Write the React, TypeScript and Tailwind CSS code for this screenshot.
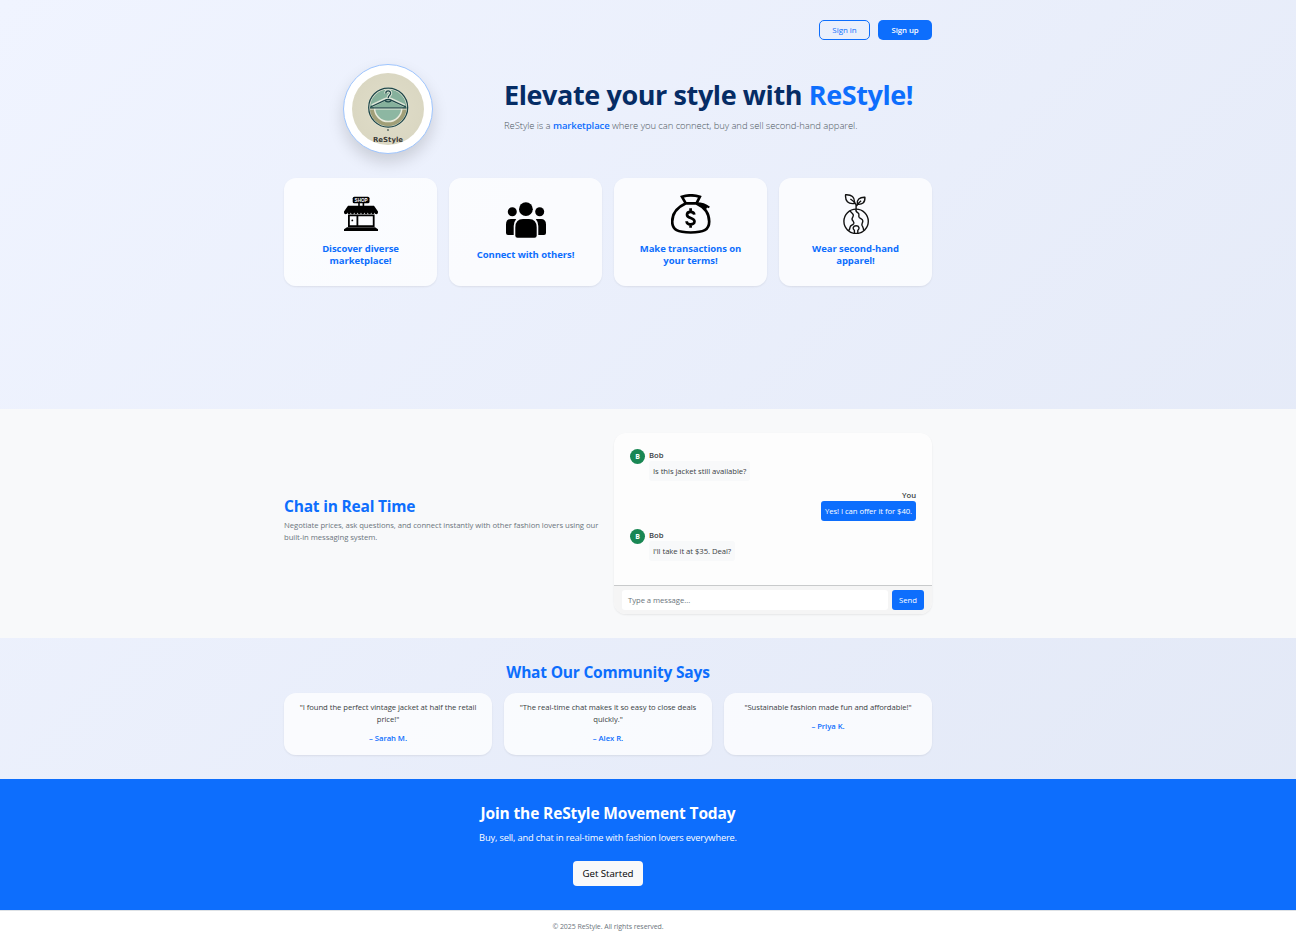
import type { ReactNode } from "react";

function Logo() {
  return (
    <svg viewBox="0 0 72 72" className="size-[72px] rounded-full">
      <defs>
        <radialGradient id="paper">
          <stop offset="0" stopColor="#e0ddc9" />
          <stop offset="1" stopColor="#dad7c2" />
        </radialGradient>
      </defs>
      <rect width="72" height="72" fill="url(#paper)" />
      <circle cx="36.2" cy="34.6" r="20.6" fill="#e6e6d6" />
      <circle cx="36.2" cy="34.6" r="18.2" fill="#86b19c" />
      <path d="M18 35a18.2 18.2 0 0 0 36.4 0z" fill="#a19f78" />
      <path d="M22.6 35a13.6 13.6 0 0 0 27.2 0z" fill="#8db7a2" stroke="#e9ebdd" strokeWidth="1.5" />
      <circle cx="36.2" cy="34.6" r="19.5" fill="none" stroke="#20484a" strokeWidth="1.3" />
      <path
        d="M33.8 20.4c0-3.4 4.8-3.4 4.8-.2 0 2.200-2.400 2-2.400 4.800M20 32.600l12.700-6q3.500-1.600 7 0l12.700 6"
        fill="none"
        stroke="#dfe6d8"
        strokeWidth="3.2"
      />
      <path
        d="M33.8 20.4c0-3.4 4.8-3.4 4.8-.2 0 2.200-2.400 2-2.400 4.800M18.500 34l14.200-6.600q3.500-1.800 7 0L54 34M33.200 28q3 1.600 6 0"
        fill="none"
        stroke="#20484a"
        strokeWidth="1.3"
      />
      <path d="M18 36h36.5" stroke="#e9ebdd" strokeWidth="1" />
      <path d="M18 34.900h36.5" stroke="#20484a" strokeWidth="1.2" />
      <circle cx="36" cy="57" r="0.9" fill="#4d5f58" />
      <text x="36" y="69" textAnchor="middle" textLength="30" className="fill-[#3b3b38] font-['DejaVu_Sans'] text-[7px] font-bold">
        ReStyle
      </text>
    </svg>
  );
}

function ShopIcon() {
  return (
    <svg viewBox="0 0 40 40" className="size-10">
      <rect x="11.7" y="2.7" width="16.8" height="6.6" rx="1.6" />
      <text x="20.1" y="7.7" textAnchor="middle" textLength="13" className="fill-white font-['Liberation_Sans'] text-[4.6px] font-bold">
        SHOP
      </text>
      <path d="M17.2 9h1.6v3h-1.6zM21.6 9h1.6v3h-1.6z" />
      <path d="M7 11.7h26L37 17.5v1a1.7 1.7 0 0 1-3.4 0 1.7 1.7 0 0 1-3.4 0 1.7 1.7 0 0 1-3.4 0 1.7 1.7 0 0 1-3.4 0 1.7 1.7 0 0 1-3.4 0 1.7 1.7 0 0 1-3.4 0 1.7 1.7 0 0 1-3.4 0 1.7 1.7 0 0 1-3.4 0 1.7 1.7 0 0 1-3.4 0 1.7 1.7 0 0 1-3.4 0v-1z" />
      <path d="M7.900 21.300h24.800v10.800H7.900zM16.400 21.500v10.600" fill="none" stroke="#000" strokeWidth="1.8" />
      <circle cx="11.3" cy="26.4" r="0.9" />
      <path d="M6 33.300h28l3 2V37H3v-1.700z" />
    </svg>
  );
}

function PeopleIcon() {
  return (
    <svg viewBox="0 0 40 40" className="size-10">
      <circle cx="19.9" cy="9.2" r="6.9" />
      <circle cx="6.3" cy="11.8" r="4.5" />
      <circle cx="33.7" cy="11.8" r="4.5" />
      <path d="M17 19h6q7.700 0 7.700 8.500v8q0 2.200-2.200 2.200h-17q-2.200 0-2.200-2.200v-8Q9.300 19 17 19z" />
      <path d="M5 19h4.500q1 0 .5.600-2.300 2.400-2.300 6.400v9H2q-2 0-2-2v-8.500Q0 19 5 19zM35 19h-4.500q-1 0-.5.600 2.300 2.400 2.300 6.400v9H38q2 0 2-2v-8.500q0-5.500-5-5.500z" />
    </svg>
  );
}

function MoneyBagIcon() {
  return (
    <svg viewBox="0 0 40 40" className="size-10" fill="none" stroke="#000" strokeWidth="2.7">
      <path d="M14.800 9.400 11 2.800Q19.800-.2 28.800 2.800L25.500 9.400z" />
      <path d="M14.500 9.400C5.500 13.500 1.200 20.500 1.200 27.500c0 8.500 5.600 11 18.500 11s18.500-2.500 18.500-11c0-7-3.800-14-12.700-18.100" />
      <path d="M25 9.300c5-.2 9.500 1.300 13.300 4.200M26 9.500c4 .8 7 2.300 9.500 5" strokeWidth="2.2" />
      <path d="M23.300 20.600c-.4-3.700-7.300-3.700-7.300.1 0 4.100 7.500 2.500 7.500 6.700 0 4-7.700 4-7.900-.2M19.600 14.300v3.700M19.600 30v3.700" strokeWidth="2.7" />
    </svg>
  );
}

function EarthIcon() {
  return (
    <svg viewBox="0 0 40 40" className="size-10" fill="none" stroke="#111" strokeWidth="1.4" strokeLinejoin="round">
      <g transform="translate(-.4)">
        <circle cx="20.5" cy="27.3" r="12.2" />
        <path d="M20.500 15V11.500Q20.500 9 14.800 5M21 11.800q2-3 4.500-5" />
        <path d="M10 .8c5.800-.3 9.600 2 8.800 8.700C12.500 10.400 9.400 7 10 .8z" />
        <path d="M29.300 3.300c-5.500-.2-8.300 2.400-7.600 7 4.800.6 8-1.500 7.600-7z" />
        <path d="M14.500 16.600c.6 2.200 2.600 2 3.200 4.400.4 2-1.800 2.800-1.200 4.600.8 1.800 2.400 2.200 1.600 4-1.200 2-3.200 1.400-3.600 3.600-.2 1.600-.6 2.600-1.600 3.600M20.400 15.200c-.6 2.600.8 3.200 2.400 4 1.400 1-.4 2.800.8 4.200 1.400 1.400 3.400 1.400 3.600 3.400.2 2-1.400 2.600-.8 4.400.6 1.600 1.800 2.600 1.600 5.400" />
        <path d="M18.800 39v-2.600c-2.200-1.400-1.400-4.600 1.700-4.600s3.900 3.200 1.700 4.600V39" />
      </g>
    </svg>
  );
}

function Container({ children, className = "" }: { children: ReactNode; className?: string }) {
  return (
    <div className="flex w-[1216px] justify-center">
      <div className={`w-[648px] ${className}`}>{children}</div>
    </div>
  );
}

const features = [
  { icon: <ShopIcon />, lines: ["Discover diverse", "marketplace!"] },
  { icon: <PeopleIcon />, lines: ["Connect with others!"] },
  { icon: <MoneyBagIcon />, lines: ["Make transactions on", "your terms!"] },
  { icon: <EarthIcon />, lines: ["Wear second-hand", "apparel!"] },
];

const quotes = [
  { lines: ['"I found the perfect vintage jacket at half the retail', 'price!"'], author: "– Sarah M." },
  { lines: ['"The real-time chat makes it so easy to close deals', 'quickly."'], author: "– Alex R." },
  { lines: ['"Sustainable fashion made fun and affordable!"'], author: "– Priya K." },
];

function BobMessage({ children }: { children: ReactNode }) {
  return (
    <div className="flex gap-1">
      <div className="flex size-[15px] items-center justify-center rounded-full bg-[#198754] text-[7px] font-bold text-white">B</div>
      <div className="flex flex-col items-start">
        <div className="h-3 font-semibold">Bob</div>
        <div className="flex h-5 items-center rounded-[3px] bg-[#f8f9fa] px-1">{children}</div>
      </div>
    </div>
  );
}

export default function App() {
  return (
    <div className="min-h-[939px] w-full overflow-hidden bg-[linear-gradient(135deg,#f0f4ff,#e2e8f6)] font-['Open_Sans','Noto_Sans',sans-serif] text-[7.7px] leading-3 tracking-[-0.05px] whitespace-nowrap text-[#3a3f44]">
      <header className="h-[409px] pt-5">
        <Container>
          <div className="flex justify-end gap-2">
            <button className="flex h-5 w-[51px] items-center justify-center rounded-[5px] border border-[#0d6efd] text-[8px] text-[#0d6efd]">Sign in</button>
            <button className="flex h-5 w-[54px] items-center justify-center rounded-[5px] bg-[#0d6efd] text-[7.8px] font-semibold text-white">Sign up</button>
          </div>
          <div className="mt-6 flex">
            <div className="flex w-[220px] pl-[59px]">
              <div className="flex size-[90px] items-center justify-center rounded-full border border-[#9ec5fe] bg-white shadow-[0_8px_16px_rgba(0,0,0,0.15)]">
                <Logo />
              </div>
            </div>
            <div className="pt-[14px]">
              <h1 className="text-[27px] leading-[34px] font-bold tracking-[-0.4px] text-[#052c65]">
                Elevate your style with <span className="text-[#0d6efd]">ReStyle!</span>
              </h1>
              <p className="mt-[6px] text-[9.5px] leading-[15px] font-light tracking-[-0.08px] text-[#4d5761]">
                ReStyle is a <span className="font-semibold text-[#0d6efd]">marketplace</span> where you can connect, buy and sell second-hand apparel.
              </p>
            </div>
          </div>
          <div className="mt-6 grid grid-cols-4 gap-3">
            {features.map((f) => (
              <div key={f.lines[0]} className="flex h-[108px] flex-col items-center justify-center rounded-xl bg-white/75 pb-1 shadow-[0_1px_2px_rgba(0,0,0,0.075)]">
                {f.icon}
                <div className="mt-[9px] -mb-px text-center text-[9.5px] leading-3 font-bold tracking-[-0.07px] text-[#0d6efd]">
                  {f.lines.map((l) => (
                    <div key={l}>{l}</div>
                  ))}
                </div>
              </div>
            ))}
          </div>
        </Container>
      </header>

      <section className="h-[229px] bg-[#f8f9fa] pt-6">
        <Container className="flex items-center">
          <div className="w-[330px] pb-2">
            <h2 className="text-[15.5px] leading-[19px] font-bold tracking-[-0.2px] text-[#0d6efd]">Chat in Real Time</h2>
            <p className="mt-[3px] text-[#6c757d]">
              Negotiate prices, ask questions, and connect instantly with other fashion lovers using our
              <br />
              built-in messaging system.
            </p>
          </div>
          <div className="h-[181px] w-[318px] overflow-hidden rounded-xl bg-[#fdfdfd] shadow-[0_1px_2px_rgba(0,0,0,0.075)]">
            <div className="flex h-[152px] flex-col gap-2 px-4 pt-4">
              <BobMessage>Is this jacket still available?</BobMessage>
              <div className="flex flex-col items-end">
                <div className="h-3 font-semibold">You</div>
                <div className="flex h-5 w-[95px] items-center justify-center rounded-[3px] bg-[#0d6efd] text-white">Yes! I can offer it for $40.</div>
              </div>
              <BobMessage>I'll take it at $35. Deal?</BobMessage>
            </div>
            <div className="flex h-[29px] gap-1 border-t border-[#c8cacb] bg-[#f5f5f5] px-2 pt-1">
              <div className="flex h-5 w-[266px] items-center rounded-[3px] bg-white px-1.5 text-[#6c757d]">Type a message...</div>
              <button className="flex h-5 w-8 items-center justify-center rounded-[3px] bg-[#0d6efd] text-white">Send</button>
            </div>
          </div>
        </Container>
      </section>

      <section className="h-[141px] pt-[25px]">
        <Container>
          <h2 className="text-center text-[15.5px] leading-[19px] font-bold tracking-[-0.2px] text-[#0d6efd]">What Our Community Says</h2>
          <div className="mt-[11px] grid grid-cols-3 gap-3">
            {quotes.map((q) => (
              <div key={q.author} className="h-[62px] rounded-xl bg-white/75 pt-2 text-center shadow-[0_1px_2px_rgba(0,0,0,0.075)]">
                {q.lines.map((l) => (
                  <div key={l}>{l}</div>
                ))}
                <div className="mt-[7px] font-semibold text-[#0d6efd]">{q.author}</div>
              </div>
            ))}
          </div>
        </Container>
      </section>

      <section className="h-[131px] bg-[#0d6efd] pt-[25px] text-white">
        <Container className="flex flex-col items-center">
          <h2 className="text-[15.5px] leading-[19px] font-bold tracking-[-0.14px]">Join the ReStyle Movement Today</h2>
          <p className="mt-[7px] text-[9.3px] leading-[15px] tracking-[-0.18px]">Buy, sell, and chat in real-time with fashion lovers everywhere.</p>
          <button className="mt-4 flex h-[25px] w-[70px] items-center justify-center rounded-[4px] bg-[#f8f9fa] text-[9.7px] text-black">Get Started</button>
        </Container>
      </section>

      <footer className="h-[29px] border-t border-[#dee2e6] bg-white pt-[10px]">
        <Container className="text-center text-[7px] tracking-[-0.065px] text-[#6c757d]">© 2025 ReStyle. All rights reserved.</Container>
      </footer>
    </div>
  );
}
